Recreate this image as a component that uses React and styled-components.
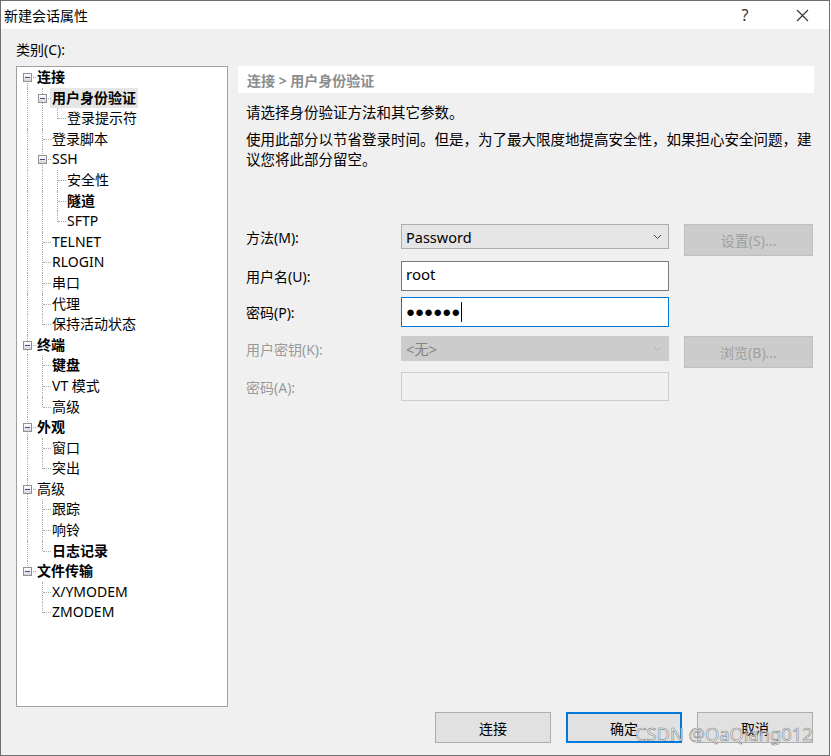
import React from 'react';
import styled, { createGlobalStyle, css } from 'styled-components';

const Global = createGlobalStyle`
  html, body { margin: 0; padding: 0; background: #fff; }
  body { font-family: "Noto Sans", "Noto Sans CJK SC", sans-serif; }
  * { box-sizing: border-box; }
`;

const Window = styled.div`
  position: relative;
  width: 830px;
  height: 756px;
  border: 1px solid #6e6e6e;
  background: #f0f0f0;
  display: flex;
  flex-direction: column;
  color: #000;
`;

const TitleBar = styled.div`
  height: 28px;
  background: #fff;
  display: flex;
  align-items: center;
  padding-left: 3px;
  padding-right: 11px;
  font-size: 14px;
  font-family: "Noto Sans CJK SC", sans-serif;
`;

const Title = styled.div`
  flex: 1;
`;

const TitleBtn = styled.div`
  width: ${p => p.$w}px;
  margin-left: ${p => p.$ml || 0}px;
  display: flex;
  justify-content: center;
  align-items: center;
  color: #333;
  font-size: 16px;
  font-family: "Noto Sans", sans-serif;
`;

const Body = styled.div`
  flex: 1;
  padding: 12px 16px 0 15px;
  display: flex;
  flex-direction: column;
`;

const CatLabel = styled.div`
  font-size: 14px;
  line-height: 18px;
  height: 25px;
  font-family: "Noto Sans", "Noto Sans CJK SC", sans-serif;
`;

const Main = styled.div`
  display: grid;
  grid-template-columns: 212px 576px;
  column-gap: 10px;
`;

const TreePanel = styled.div`
  height: 641px;
  background: #fff;
  border: 1px solid #a0a0a0;
  padding: 0 0 0 3px;
  font-size: 14px;
`;

const Row = styled.div`
  display: flex;
  height: 20.6px;
  align-items: stretch;
`;

const Cell = styled.span`
  position: relative;
  width: 15px;
  flex: none;
  ${p => p.$line && css`
    &::before {
      content: '';
      position: absolute;
      left: 7px; top: 0; bottom: 0;
      border-left: 1px dotted #a8a8a8;
    }
  `}
`;

const Conn = styled.span`
  position: relative;
  width: 15px;
  flex: none;
  &::before {
    content: '';
    position: absolute;
    left: 7px;
    top: ${p => (p.$top ? '0' : '10px')};
    bottom: ${p => (p.$bottom ? '0' : '10px')};
    border-left: 1px dotted #a8a8a8;
  }
  &::after {
    content: '';
    position: absolute;
    left: 8px; right: -1px; top: 10px;
    border-top: 1px dotted #a8a8a8;
  }
`;

const Box = styled.span`
  position: absolute;
  left: 3px;
  top: 6px;
  width: 9px;
  height: 9px;
  border: 1px solid #919191;
  background: linear-gradient(#ffffff, #d6d6d6);
  z-index: 1;
  &::after {
    content: '';
    position: absolute;
    left: 1px; top: 3px;
    width: 5px; height: 1px;
    background: #3d4f8c;
  }
`;

const Label = styled.span`
  padding: 0 2px;
  line-height: 20.6px;
  white-space: nowrap;
  font-weight: ${p => (p.$bold ? 700 : 400)};
  background: ${p => (p.$sel ? '#e6e6e6' : 'transparent')};
  color: #000;
`;

const Right = styled.div`
  display: flex;
  flex-direction: column;
`;

const Header = styled.div`
  height: 27px;
  background: #fff;
  display: flex;
  align-items: center;
  padding-left: 9px;
  font-size: 14px;
  font-weight: 700;
  color: #8c8c8c;
`;

const Desc = styled.div`
  margin-top: ${p => p.$mt}px;
  padding-left: 8px;
  width: 580px;
  font-size: 14.5px;
  line-height: 20px;
  font-family: "Noto Sans CJK SC", sans-serif;
`;

const Form = styled.div`
  margin-top: 55px;
  display: flex;
  flex-direction: column;
`;

const FormRow = styled.div`
  display: flex;
  align-items: flex-start;
  margin-top: ${p => p.$mt}px;
`;

const FieldLabel = styled.div`
  width: 163px;
  padding-left: 8px;
  font-size: 14px;
  height: ${p => p.$h}px;
  display: flex;
  align-items: center;
  color: ${p => (p.$disabled ? '#9a9a9a' : '#000')};
`;

const Select = styled.div`
  width: 268px;
  height: 25px;
  display: flex;
  align-items: center;
  justify-content: space-between;
  padding: 0 6px 0 4px;
  font-size: 14.5px;
  border: 1px solid ${p => (p.$disabled ? '#cccccc' : '#adadad')};
  background: ${p => (p.$disabled ? '#cccccc' : '#e5e5e5')};
  color: ${p => (p.$disabled ? '#838383' : '#000')};
`;

const Input = styled.div`
  width: 268px;
  height: ${p => p.$h}px;
  display: flex;
  align-items: center;
  padding: 0 4px 4px;
  font-size: 15px;
  border: 1px solid ${p => p.$border};
  background: ${p => p.$bg};
`;

const Dots = styled.span`
  font-family: "Liberation Sans", sans-serif;
  font-size: 15px;
  margin-top: 3px;
`;

const Caret = styled.span`
  display: inline-block;
  width: 1px;
  height: 20px;
  background: #000;
  margin-left: 1px;
  margin-top: 4px;
`;

const Button = styled.div`
  width: ${p => p.$w || 116}px;
  height: ${p => p.$h || 31}px;
  display: flex;
  align-items: center;
  justify-content: center;
  font-size: 14px;
  background: ${p => (p.$disabled ? '#cccccc' : '#e1e1e1')};
  border: ${p => (p.$default ? '2px solid #0078d7' : `1px solid ${p.$disabled ? '#bfbfbf' : '#adadad'}`)};
  color: ${p => (p.$disabled ? '#a0a0a0' : '#000')};
`;

const SideButton = styled(Button)`
  margin-left: 15px;
`;

const Footer = styled.div`
  display: flex;
  justify-content: flex-end;
  gap: 15px;
  margin-top: 5px;
`;

const Watermark = styled.div`
  position: absolute;
  left: 634px;
  top: 720px;
  font-family: "Noto Sans", sans-serif;
  font-size: 18.3px;
  color: rgba(255, 255, 255, 0.75);
  -webkit-text-stroke: 0.6px rgba(100, 100, 100, 0.8);
  pointer-events: none;
`;

const Chevron = ({ color = '#444' }) => (
  <svg width="9" height="6" viewBox="0 0 9 6">
    <polyline points="1,1 4.5,4.5 8,1" fill="none" stroke={color} strokeWidth="1" />
  </svg>
);

const tree = [
  { label: '连接', bold: true, children: [
    { label: '用户身份验证', bold: true, sel: true, children: [{ label: '登录提示符' }] },
    { label: '登录脚本' },
    { label: 'SSH', children: [{ label: '安全性' }, { label: '隧道', bold: true }, { label: 'SFTP' }] },
    { label: 'TELNET' },
    { label: 'RLOGIN' },
    { label: '串口' },
    { label: '代理' },
    { label: '保持活动状态' },
  ] },
  { label: '终端', bold: true, children: [{ label: '键盘', bold: true }, { label: 'VT 模式' }, { label: '高级' }] },
  { label: '外观', bold: true, children: [{ label: '窗口' }, { label: '突出' }] },
  { label: '高级', children: [{ label: '跟踪' }, { label: '响铃' }, { label: '日志记录', bold: true }] },
  { label: '文件传输', bold: true, children: [{ label: 'X/YMODEM' }, { label: 'ZMODEM' }] },
];

function flatten(nodes, guides = [], level = 0, out = []) {
  nodes.forEach((n, i) => {
    const hasNext = i < nodes.length - 1;
    out.push({
      ...n,
      level,
      guides,
      top: !(level === 0 && i === 0),
      bottom: hasNext,
      hasChildren: !!(n.children && n.children.length),
    });
    if (n.children) flatten(n.children, [...guides, hasNext], level + 1, out);
  });
  return out;
}

const rows = flatten(tree);

export default function App() {
  return (
    <>
      <Global />
      <Window>
        <TitleBar>
          <Title>新建会话属性</Title>
          <TitleBtn $w={24}>?</TitleBtn>
          <TitleBtn $w={32} $ml={29}>
            <svg width="13" height="13" viewBox="0 0 13 13">
              <path d="M1 1L12 12M12 1L1 12" stroke="#333" strokeWidth="1.1" />
            </svg>
          </TitleBtn>
        </TitleBar>
        <Body>
          <CatLabel>类别(C):</CatLabel>
          <Main>
            <TreePanel>
              {rows.map((r, idx) => (
                <Row key={idx}>
                  {r.guides.map((g, gi) => <Cell key={gi} $line={g} />)}
                  <Conn $top={r.top} $bottom={r.bottom}>
                    {r.hasChildren && <Box />}
                  </Conn>
                  <Label $bold={r.bold} $sel={r.sel}>{r.label}</Label>
                </Row>
              ))}
            </TreePanel>
            <Right>
              <Header>连接 &gt; 用户身份验证</Header>
              <Desc $mt={9}>请选择身份验证方法和其它参数。</Desc>
              <Desc $mt={7}>使用此部分以节省登录时间。但是，为了最大限度地提高安全性，如果担心安全问题，建议您将此部分留空。</Desc>
              <Form>
                <FormRow $mt={0}>
                  <FieldLabel $h={25}>方法(M):</FieldLabel>
                  <Select>Password<Chevron /></Select>
                  <SideButton $w={129} $h={32} $disabled>设置(S)...</SideButton>
                </FormRow>
                <FormRow $mt={5}>
                  <FieldLabel $h={30}>用户名(U):</FieldLabel>
                  <Input $h={30} $border="#7a7a7a" $bg="#fff">root</Input>
                </FormRow>
                <FormRow $mt={6}>
                  <FieldLabel $h={30}>密码(P):</FieldLabel>
                  <Input $h={30} $border="#0078d7" $bg="#fff">
                    <Dots>●●●●●●</Dots><Caret />
                  </Input>
                </FormRow>
                <FormRow $mt={9}>
                  <FieldLabel $h={25} $disabled>用户密钥(K):</FieldLabel>
                  <Select $disabled>&lt;无&gt;<Chevron color="#b5b5b5" /></Select>
                  <SideButton $w={129} $h={32} $disabled>浏览(B)...</SideButton>
                </FormRow>
                <FormRow $mt={4}>
                  <FieldLabel $h={29} $disabled>密码(A):</FieldLabel>
                  <Input $h={29} $border="#cccccc" $bg="#f0f0f0" />
                </FormRow>
              </Form>
            </Right>
          </Main>
          <Footer>
            <Button>连接</Button>
            <Button $default>确定</Button>
            <Button>取消</Button>
          </Footer>
        </Body>
        <Watermark>CSDN @QaQiang012</Watermark>
      </Window>
    </>
  );
}
